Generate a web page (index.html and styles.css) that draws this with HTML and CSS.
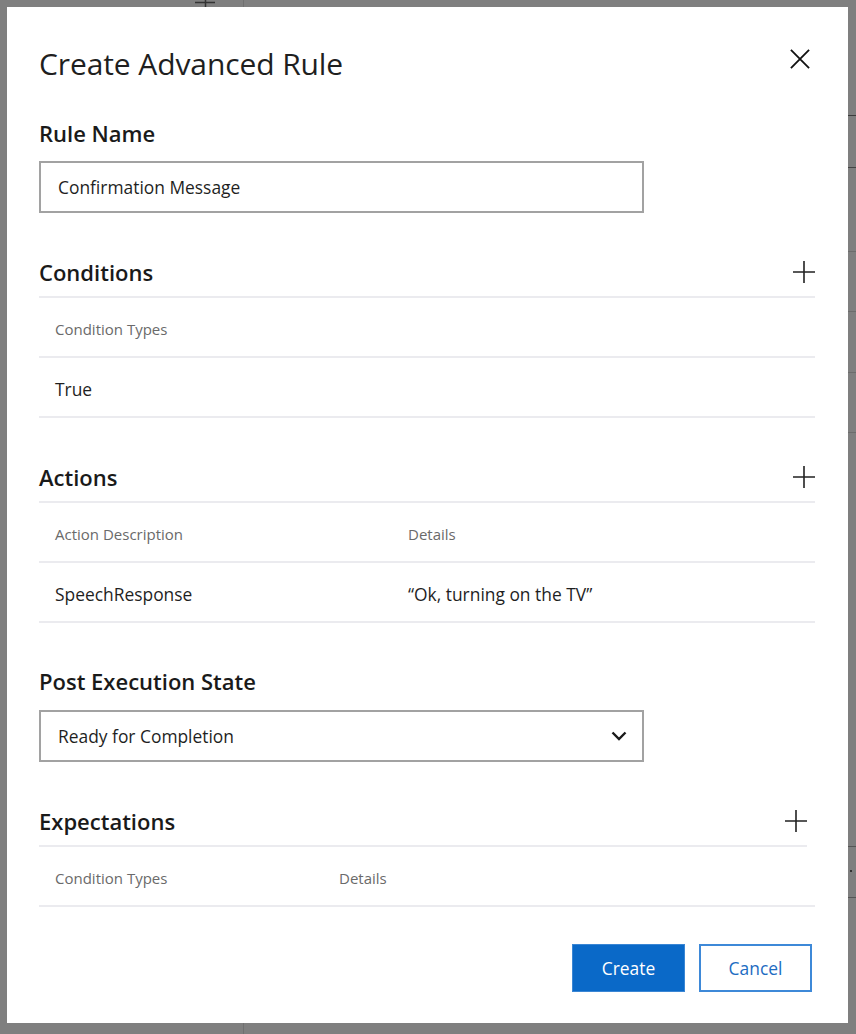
FILE: index.html
```html
<!DOCTYPE html>
<html lang="en">
<head>
<meta charset="utf-8">
<title>Create Advanced Rule</title>
<link rel="stylesheet" href="styles.css">
</head>
<body>
<svg class="backdrop" width="856" height="1034" viewBox="0 0 856 1034" aria-hidden="true">
  <line x1="195" y1="2.5" x2="215" y2="2.5" stroke="#333" stroke-width="1.5"/>
  <line x1="205.5" y1="0" x2="205.5" y2="7" stroke="#333" stroke-width="1.5"/>
  <line x1="243.5" y1="0" x2="243.5" y2="7" stroke="#707070" stroke-width="1"/>
  <line x1="243.5" y1="1023" x2="243.5" y2="1034" stroke="#707070" stroke-width="1"/>
  <line x1="848" y1="115.5" x2="856" y2="115.5" stroke="#3c3c3c" stroke-width="1"/>
  <line x1="848" y1="167.5" x2="856" y2="167.5" stroke="#444" stroke-width="1"/>
  <line x1="848" y1="251.5" x2="856" y2="251.5" stroke="#6c6c6c" stroke-width="1"/>
  <line x1="848" y1="311.5" x2="856" y2="311.5" stroke="#6c6c6c" stroke-width="1"/>
  <line x1="848" y1="372.5" x2="856" y2="372.5" stroke="#6c6c6c" stroke-width="1"/>
  <line x1="848" y1="432.5" x2="856" y2="432.5" stroke="#6c6c6c" stroke-width="1"/>
  <line x1="848" y1="846.5" x2="856" y2="846.5" stroke="#555" stroke-width="1"/>
  <line x1="848" y1="897.5" x2="856" y2="897.5" stroke="#555" stroke-width="1"/>
  <rect x="850" y="870" width="2" height="2" fill="#333"/>
</svg>

<div class="dialog" role="dialog" aria-labelledby="dlg-title">
  <div class="dialog-head">
    <h1 id="dlg-title" class="dialog-title">Create Advanced Rule</h1>
    <button class="icon-btn close-btn" aria-label="Close">
      <svg width="22" height="22" viewBox="0 0 22 22"><path d="M1 1 L21 21 M21 1 L1 21" stroke="#111" stroke-width="2" fill="none"/></svg>
    </button>
  </div>

  <div class="field">
    <label class="label">Rule Name</label>
    <div class="input">Confirmation Message</div>
  </div>

  <section class="section">
    <div class="section-head">
      <h2 class="section-title">Conditions</h2>
      <button class="icon-btn plus-btn" aria-label="Add condition">
        <svg width="22" height="22" viewBox="0 0 22 22"><path d="M0 11 H22 M11 0 V22" stroke="#222" stroke-width="1.6" fill="none"/></svg>
      </button>
    </div>
    <div class="row row-header cols-1"><span>Condition Types</span></div>
    <div class="row cols-1"><span>True</span></div>
  </section>

  <section class="section">
    <div class="section-head">
      <h2 class="section-title">Actions</h2>
      <button class="icon-btn plus-btn" aria-label="Add action">
        <svg width="22" height="22" viewBox="0 0 22 22"><path d="M0 11 H22 M11 0 V22" stroke="#222" stroke-width="1.6" fill="none"/></svg>
      </button>
    </div>
    <div class="row row-header cols-actions"><span>Action Description</span><span>Details</span></div>
    <div class="row cols-actions"><span>SpeechResponse</span><span>“Ok, turning on the TV”</span></div>
  </section>

  <div class="field field-post">
    <label class="label">Post Execution State</label>
    <div class="input select">
      <span>Ready for Completion</span>
      <svg class="chevron" width="16" height="10" viewBox="0 0 16 10"><path d="M1.5 1.5 L8 8 L14.5 1.5" stroke="#1a1a1a" stroke-width="2.4" fill="none"/></svg>
    </div>
  </div>

  <section class="section section-exp">
    <div class="section-head narrow">
      <h2 class="section-title">Expectations</h2>
      <button class="icon-btn plus-btn" aria-label="Add expectation">
        <svg width="22" height="22" viewBox="0 0 22 22"><path d="M0 11 H22 M11 0 V22" stroke="#222" stroke-width="1.6" fill="none"/></svg>
      </button>
    </div>
    <div class="row row-header cols-exp"><span>Condition Types</span><span>Details</span></div>
  </section>

  <div class="actions">
    <button class="btn btn-primary">Create</button>
    <button class="btn btn-secondary">Cancel</button>
  </div>
</div>
</body>
</html>
```

FILE: styles.css
```css
* { box-sizing: border-box; }

html, body {
  margin: 0;
  padding: 0;
}

body {
  width: 856px;
  height: 1034px;
  background: #7f7f7f;
  font-family: "Open Sans", "Noto Sans", "Liberation Sans", sans-serif;
  color: #1f1f1f;
  overflow: hidden;
  padding: 7px 8px 11px 7px;
}

.backdrop {
  position: fixed;
  left: 0;
  top: 0;
  z-index: 0;
}

.dialog {
  position: relative;
  z-index: 1;
  width: 841px;
  height: 1016px;
  background: #ffffff;
  padding: 31px 33px 0 32px;
  display: flex;
  flex-direction: column;
}

.dialog-head {
  display: flex;
  justify-content: space-between;
  align-items: center;
  height: 50px;
}

.dialog-title {
  margin: 0;
  font-size: 30px;
  font-weight: 400;
  color: #1f1f1f;
  letter-spacing: -0.1px;
}

.icon-btn {
  border: 0;
  background: transparent;
  padding: 0;
  display: flex;
  align-items: center;
  justify-content: center;
  cursor: pointer;
}

.close-btn {
  width: 22px;
  height: 22px;
  margin-right: 4px;
  margin-top: -8px;
}

.close-btn svg { width: 20px; height: 20px; }

.field {
  margin-top: 20px;
  display: flex;
  flex-direction: column;
}

.label {
  height: 50px;
  line-height: 50px;
  font-size: 22px;
  font-weight: 600;
  color: #1a1a1a;
}

.input {
  margin-top: 3px;
  width: 605px;
  height: 52px;
  border: 2px solid #a2a2a2;
  padding: 0 17px;
  display: flex;
  align-items: center;
  font-size: 17.4px;
  color: #1f1f1f;
}

.select {
  margin-top: 4px;
  justify-content: space-between;
  padding-right: 15px;
}

.section { margin-top: 35px; }

.section-head {
  height: 50px;
  display: flex;
  justify-content: space-between;
  align-items: center;
  border-bottom: 2px solid #ebebef;
}

.section-head.narrow { margin-right: 8px; }

.section-title {
  margin: 0;
  font-size: 22px;
  font-weight: 600;
  color: #1a1a1a;
}

.plus-btn { width: 22px; height: 22px; }

.row {
  height: 60px;
  border-bottom: 2px solid #ebebef;
  display: grid;
  align-items: center;
  padding-left: 16px;
  padding-top: 3px;
  font-size: 17.4px;
  color: #1f1f1f;
}

.row-header {
  font-size: 15px;
  color: #6a6a6a;
}

.cols-1 { grid-template-columns: 1fr; }
.cols-actions { grid-template-columns: 353px 1fr; }
.cols-exp { grid-template-columns: 284px 1fr; }

.field-post { margin-top: 33px; }

.section-exp { margin-top: 35px; }

.actions {
  margin-top: 37px;
  display: flex;
  justify-content: flex-end;
  gap: 14px;
  padding-right: 3px;
}

.btn {
  width: 113px;
  height: 48px;
  font-family: inherit;
  font-size: 17.4px;
  cursor: pointer;
}

.btn-primary {
  background: #0a69c8;
  color: #ffffff;
  border: 1px solid #3a86d4;
}

.btn-secondary {
  background: #ffffff;
  color: #1d6cc2;
  border: 2px solid #3e89d8;
}
```
